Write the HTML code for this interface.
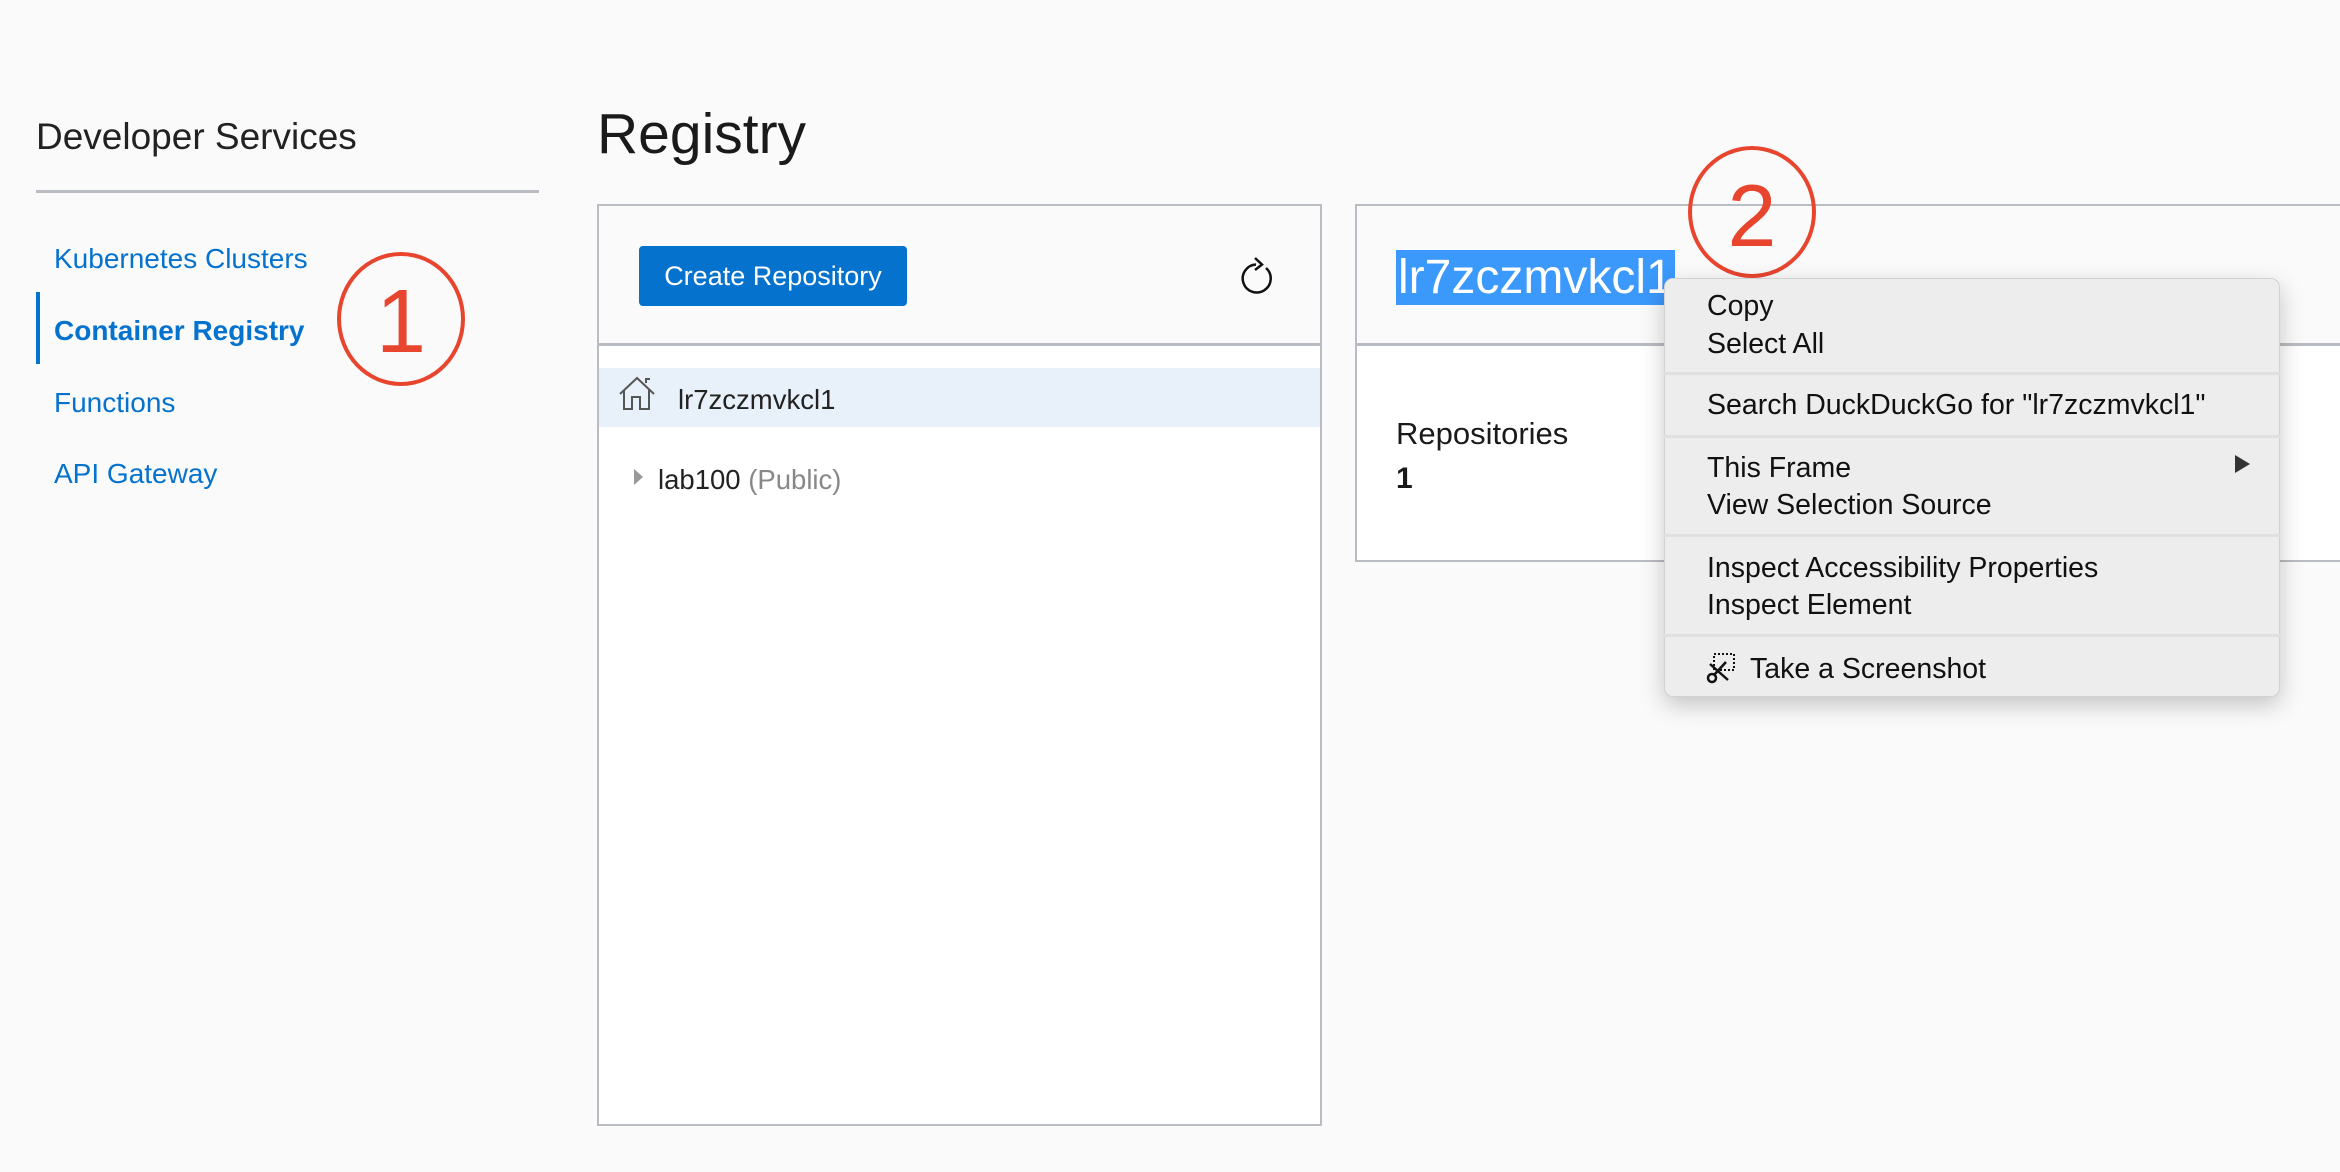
<!DOCTYPE html>
<html><head><meta charset="utf-8"><style>
*{margin:0;padding:0;box-sizing:border-box}
body{width:2340px;height:1172px;background:#fafafa;font-family:"Liberation Sans",Arial,sans-serif;position:relative;overflow:hidden;color:#1a1a1a}
.a{position:absolute;white-space:nowrap}
.nav{color:#0572ce;font-size:28px}
.mi{position:absolute;left:1707px;font-size:28.5px;color:#111;line-height:1}
.sep{position:absolute;left:0;right:0;height:3px;background:#e0e0e0}
</style></head><body>
<div class="a" style="left:36px;top:116px;font-size:37px;color:#222">Developer Services</div>
<div class="a" style="left:36px;top:190px;width:503px;height:3px;background:#b9bcc2"></div>
<div class="a nav" style="left:54px;top:243px">Kubernetes Clusters</div>
<div class="a" style="left:36px;top:292px;width:4px;height:72px;background:#0572ce"></div>
<div class="a nav" style="left:54px;top:315px;font-weight:bold">Container Registry</div>
<div class="a nav" style="left:54px;top:387px">Functions</div>
<div class="a nav" style="left:54px;top:458px">API Gateway</div>
<div class="a" style="left:337px;top:252px;width:128px;height:134px;border:4px solid #e8452f;border-radius:50%"></div>
<div class="a" style="left:337px;top:277px;width:128px;text-align:center;font-size:90px;color:#e8452f;line-height:1">1</div>

<div class="a" style="left:597px;top:101px;font-size:57px;color:#1a1a1a">Registry</div>

<div class="a" style="left:597px;top:204px;width:725px;height:922px;border:2px solid #b9bcc2;background:#fff"></div>
<div class="a" style="left:599px;top:206px;width:721px;height:140px;background:#fafafa;border-bottom:3px solid #b9bcc2"></div>
<div class="a" style="left:639px;top:246px;width:268px;height:60px;background:#0572ce;border-radius:4px;color:#fff;font-size:27px;line-height:60px;text-align:center">Create Repository</div>
<svg class="a" style="left:1240px;top:255px" width="40" height="44" viewBox="0 0 40 44"><path d="M26 13 A14 14 0 1 1 16 9.5" fill="none" stroke="#111" stroke-width="2.5"/><path d="M15 3 L22 9.5 L15 15" fill="none" stroke="#111" stroke-width="2.5"/></svg>
<div class="a" style="left:599px;top:368px;width:721px;height:59px;background:#e8f1fa"></div>
<svg class="a" style="left:618px;top:375px" width="40" height="38" viewBox="0 0 40 38"><path d="M2 19 L19 3 L36 19 M6 15 V34 H14 V22 H22 V34 H31 V15 M28 8 V4 H32" fill="none" stroke="#555" stroke-width="2"/></svg>
<div class="a" style="left:678px;top:384px;font-size:27.5px;color:#222">lr7zczmvkcl1</div>
<div class="a" style="left:634px;top:469px;width:0;height:0;border-top:8px solid transparent;border-bottom:8px solid transparent;border-left:9px solid #999"></div>
<div class="a" style="left:658px;top:464px;font-size:27.5px;color:#222">lab100 <span style="color:#888">(Public)</span></div>

<div class="a" style="left:1355px;top:204px;width:1000px;height:358px;border:2px solid #b9bcc2;background:#fff"></div>
<div class="a" style="left:1357px;top:206px;width:1000px;height:140px;background:#fafafa;border-bottom:3px solid #b9bcc2"></div>
<div class="a" style="left:1396px;top:250px;height:55px;padding:0 2px;background:#3b99fc;color:#fff;font-size:48px;line-height:55px">lr7zczmvkcl1</div>
<div class="a" style="left:1396px;top:416px;font-size:31px;color:#1a1a1a">Repositories</div>
<div class="a" style="left:1396px;top:462px;font-size:30px;font-weight:bold">1</div>

<div class="a" style="left:1688px;top:146px;width:128px;height:132px;border:4px solid #e8452f;border-radius:50%;background:transparent"></div>
<div class="a" style="left:1688px;top:172px;width:128px;text-align:center;font-size:88px;color:#e8452f;line-height:1">2</div>

<div class="a" style="left:1664px;top:278px;width:616px;height:419px;background:#ededed;border:1px solid #d2d2d2;border-radius:9px;box-shadow:0 8px 24px rgba(0,0,0,.22)">
</div>
<div class="a" style="left:1664px;top:278px;width:616px;height:419px">
<div class="mi" style="left:43px;top:14px">Copy</div>
<div class="mi" style="left:43px;top:52px">Select All</div>
<div class="sep" style="top:94px"></div>
<div class="mi" style="left:43px;top:113px">Search DuckDuckGo for "lr7zczmvkcl1"</div>
<div class="sep" style="top:157px"></div>
<div class="mi" style="left:43px;top:176px">This Frame</div>
<div class="a" style="left:571px;top:177px;width:0;height:0;border-top:9px solid transparent;border-bottom:9px solid transparent;border-left:15px solid #333"></div>
<div class="mi" style="left:43px;top:213px">View Selection Source</div>
<div class="sep" style="top:256px"></div>
<div class="mi" style="left:43px;top:276px">Inspect Accessibility Properties</div>
<div class="mi" style="left:43px;top:313px">Inspect Element</div>
<div class="sep" style="top:356px"></div>
<svg class="a" style="left:42px;top:374px" width="32" height="32" viewBox="0 0 32 32"><rect x="8" y="2" width="20" height="16" fill="none" stroke="#111" stroke-width="2" stroke-dasharray="2 2"/><circle cx="6" cy="26" r="4" fill="none" stroke="#111" stroke-width="2.5"/><path d="M8 23 L20 10 M4 12 L22 28" stroke="#111" stroke-width="2.5"/></svg>
<div class="mi" style="left:86px;top:377px">Take a Screenshot</div>
</div>
</body></html>
